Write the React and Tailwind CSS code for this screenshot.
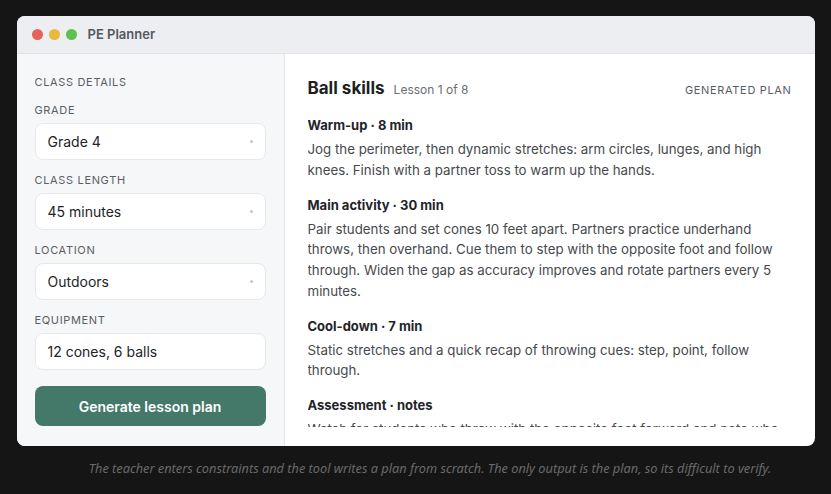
import React from 'react'

const LABEL = 'text-[11px] leading-4 tracking-[0.06em] uppercase text-[#5a5d63]'

const fields = [
  { label: 'Grade', value: 'Grade 4', select: true },
  { label: 'Class length', value: '45 minutes', select: true },
  { label: 'Location', value: 'Outdoors', select: true },
  { label: 'Equipment', value: '12 cones, 6 balls' },
]

const sections = [
  {
    title: 'Warm-up · 8 min',
    body: 'Jog the perimeter, then dynamic stretches: arm circles, lunges, and high knees. Finish with a partner toss to warm up the hands.',
  },
  {
    title: 'Main activity · 30 min',
    body: 'Pair students and set cones 10 feet apart. Partners practice underhand throws, then overhand. Cue them to step with the opposite foot and follow through. Widen the gap as accuracy improves and rotate partners every 5 minutes.',
  },
  {
    title: 'Cool-down · 7 min',
    body: 'Static stretches and a quick recap of throwing cues: step, point, follow through.',
  },
  {
    title: 'Assessment · notes',
    body: 'Watch for students who throw with the opposite foot forward and note who still needs a cue next lesson.',
  },
]

function Field({ label, value, select }) {
  return (
    <div className="mt-3">
      <p className={LABEL}>{label}</p>
      <div className="mt-[5px] h-[37px] flex items-center justify-between pl-3 pr-[12px] rounded-lg bg-white border border-[#e6e8ec] text-[14px] text-[#222428]">
        <span>{value}</span>
        {select && <span className="w-[3px] h-[3px] rounded-full bg-[#c4c7cc]" />}
      </div>
    </div>
  )
}

export default function App() {
  return (
    <div className="min-h-[494px] bg-[#151515] pt-4 font-['Inter',sans-serif]">
      <div className="mx-auto w-[798px] h-[430px] rounded-lg overflow-hidden bg-white flex flex-col">
        <div className="h-[38px] shrink-0 flex items-center gap-[6px] pl-[15px] bg-[#eceef1] border-b border-[#e0e2e6]">
          <span className="w-[11px] h-[11px] rounded-full bg-[#e5645a]" />
          <span className="w-[11px] h-[11px] rounded-full bg-[#e9b93e]" />
          <span className="w-[11px] h-[11px] rounded-full bg-[#5cc14f]" />
          <span className="ml-[5px] text-[13px] font-semibold text-[#55585e]">PE Planner</span>
        </div>

        <div className="flex flex-1 min-h-0">
          <div className="w-[268px] shrink-0 bg-[#f6f7f9] border-r border-[#e4e6ea] px-[18px] pt-5">
            <p className={LABEL}>Class details</p>
            {fields.map(f => <Field key={f.label} {...f} />)}
            <button type="button" className="mt-4 w-full h-10 rounded-lg bg-[#44796a] text-white text-[14px] font-semibold">
              Generate lesson plan
            </button>
          </div>

          <div className="flex-1 min-w-0 flex flex-col pl-[23px] pr-[23px] pt-[22px] pb-[19px]">
            <div className="flex items-baseline justify-between">
              <div className="flex items-baseline gap-[9px]">
                <h1 className="text-[17px] leading-6 font-bold text-[#1d1f22]">Ball skills</h1>
                <span className="text-[12px] text-[#6b6e74]">Lesson 1 of 8</span>
              </div>
              <span className={LABEL}>Generated plan</span>
            </div>
            <div className="mt-[15px] flex-1 min-h-0 overflow-hidden flex flex-col gap-[14px]">
              {sections.map(s => (
                <div key={s.title}>
                  <h2 className="text-[13px] leading-5 font-bold text-[#222428]">{s.title}</h2>
                  <p className="mt-1 text-[13.3px] leading-[20.75px] text-[#46494e]">{s.body}</p>
                </div>
              ))}
            </div>
          </div>
        </div>
      </div>
      <p className="mt-[13px] pl-[29px] text-center text-[12.75px] italic text-[#6a6a6a] font-['Noto_Sans',sans-serif]">
        The teacher enters constraints and the tool writes a plan from scratch. The only output is the plan, so its difficult to verify.
      </p>
    </div>
  )
}
